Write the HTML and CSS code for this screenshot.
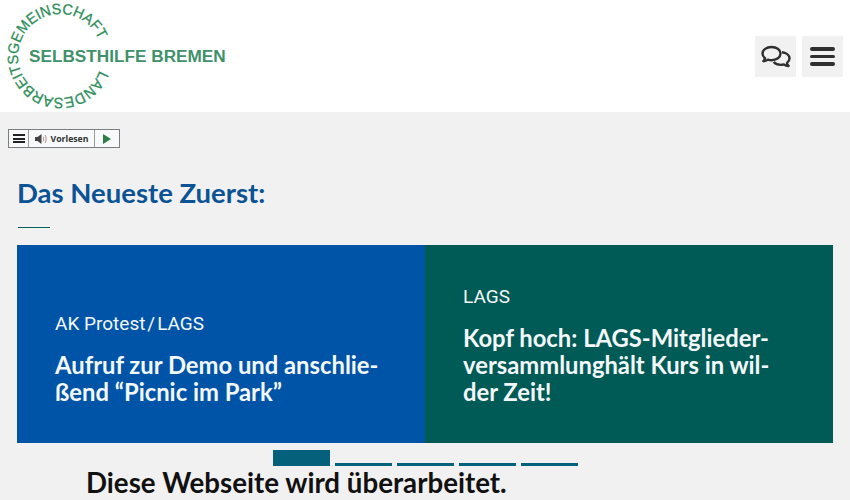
FILE: index.html
```html
<!DOCTYPE html>
<html lang="de">
<head>
<meta charset="utf-8">
<title>Landesarbeitsgemeinschaft Selbsthilfe Bremen</title>
<link rel="stylesheet" href="styles.css">
</head>
<body>
<header class="site-header">
  <a class="logo" href="#">
    <svg class="logo-ring" width="118" height="112" viewBox="0 0 118 112">
      <defs><path id="ring" d="M99.500 70.400 A42 42 0 1 1 100 43"/></defs>
      <text class="logo-ring-text"><textPath href="#ring" textLength="232" lengthAdjust="spacingAndGlyphs">LANDESARBEITSGEMEINSCHAFT</textPath></text>
    </svg>
    <span class="logo-name">SELBSTHILFE BREMEN</span>
  </a>
  <div class="header-actions">
    <button class="icon-btn" aria-label="Forum">
      <svg width="30" height="24" viewBox="0 0 30 24" fill="none" stroke="#2f2f2f" stroke-width="2.400" stroke-linejoin="round">
        <path d="M10.500 2C5.500 2 1.500 4.800 1.500 8.500c0 1.900 1 3.500 2.600 4.700-.2 1.200-.9 2.200-1.700 3 1.800-.1 3.400-.7 4.600-1.600 1.200.4 2.500.6 3.500.6 5 0 9-2.900 9-6.700S15.500 2 10.500 2z"/>
        <path d="M20.800 7.200c4.200.4 7.700 2.900 7.700 6.300 0 1.800-1 3.300-2.500 4.400.1 1.200.7 2.300 1.600 3.100-1.900 0-3.500-.6-4.700-1.600-1 .3-2 .5-3 .5-3 0-5.700-1.100-7.200-2.900"/>
      </svg>
    </button>
    <button class="icon-btn" aria-label="Menü">
      <span class="burger"><i></i><i></i><i></i></span>
    </button>
  </div>
</header>
<main class="content">
  <div class="reader">
    <span class="reader-cell reader-menu"><span class="reader-burger"><i></i><i></i><i></i></span></span>
    <span class="reader-cell reader-label">
      <svg width="13" height="10" viewBox="0 0 13 10"><path d="M0 3h2.500L6.500 0v10L2.500 7H0z" fill="#444"/><path d="M8 2.500c1 1.500 1 3.500 0 5M10 1c1.600 2.400 1.600 5.600 0 8" fill="none" stroke="#b58c8c" stroke-width="1"/></svg>
      Vorlesen
    </span>
    <span class="reader-cell reader-play"><svg width="8" height="10" viewBox="0 0 8 10"><path d="M0 0l8 5-8 5z" fill="#2e7d46"/></svg></span>
  </div>
  <h2 class="section-title">Das Neueste Zuerst:</h2>
  <hr class="section-rule">
  <section class="slider">
    <article class="slide slide-blue">
      <p class="slide-tag">AK Protest&#8202;/&#8202;LAGS</p>
      <h3 class="slide-title">Aufruf zur Demo und anschlie-<br>ßend “Picnic im Park”</h3>
    </article>
    <article class="slide slide-teal">
      <p class="slide-tag">LAGS</p>
      <h3 class="slide-title">Kopf hoch: LAGS-Mitglieder-<br>versammlunghält Kurs in wil-<br>der Zeit!</h3>
    </article>
  </section>
  <div class="dots">
    <span class="dot dot-active"></span><span class="dot"></span><span class="dot"></span><span class="dot"></span><span class="dot"></span>
  </div>
  <h2 class="notice">Diese Webseite wird überarbeitet.</h2>
</main>
</body>
</html>
```
FILE: styles.css
```css
* { box-sizing: border-box; }
html, body { margin: 0; height: 100%; overflow: hidden; }
body { background: #f1f1f1; font-family: "Lato", "Noto Sans", sans-serif; }

.site-header {
  height: 112px;
  background: #fff;
  display: flex;
  align-items: center;
  justify-content: space-between;
  padding: 0 7px 0 0;
}
.logo { display: flex; align-items: center; text-decoration: none; }
.logo-ring { flex: none; }
.logo-ring-text {
  font: 400 15px "Liberation Sans", Arial, sans-serif;
  fill: #2f8f5b;
  stroke: #2f8f5b;
  stroke-width: 0.300px;
}
.logo-name {
  font: 700 17.200px "Liberation Sans", Arial, sans-serif;
  color: #3f9169;
  margin-left: -89px;
  white-space: nowrap;
}
.header-actions { display: flex; gap: 6px; margin-top: 1px; }
.icon-btn {
  width: 41px;
  height: 41px;
  padding: 0;
  border: 0;
  background: #f1f1f1;
  display: flex;
  align-items: center;
  justify-content: center;
}
.burger { display: flex; flex-direction: column; gap: 4px; }
.burger i { display: block; width: 25px; height: 3.500px; border-radius: 2px; background: #2f2f2f; }

.content { padding: 17px 17px 0 17px; }
.reader {
  display: flex;
  width: 112px;
  height: 19px;
  margin-left: -9px;
  border: 1px solid #7d7d7d;
  background: #f7f9fb;
}
.reader-cell { display: flex; align-items: center; justify-content: center; }
.reader-cell + .reader-cell { border-left: 1px solid #9a9a9a; }
.reader-menu { width: 19px; }
.reader-burger { display: flex; flex-direction: column; gap: 1.500px; }
.reader-burger i { display: block; width: 12px; height: 2px; background: #222; }
.reader-label {
  width: 66px;
  gap: 3px;
  font: 700 8.700px "Open Sans", sans-serif;
  color: #333;
}
.reader-play { flex: 1; }

.section-title {
  margin: 29px 0 0;
  font: 700 27.500px/32px "Lato", sans-serif;
  color: #0b5394;
}
.section-rule {
  width: 32px;
  height: 1px;
  margin: 18px 0 17px 1px;
  border: 0;
  background: #00605c;
}
.slider { display: flex; height: 198px; }
.slide {
  flex: 1;
  display: flex;
  flex-direction: column;
  justify-content: flex-end;
  padding: 0 38px 37px;
  color: #f4f8fb;
}
.slide-blue { background: #0054a8; }
.slide-teal { background: #005a55; }
.slide-tag {
  margin: 0 0 16px;
  font: 400 19px/24px "Roboto", sans-serif;
}
.slide-title {
  margin: 0;
  font: 700 23.800px/27px "Lato", sans-serif;
}
.dots {
  display: flex;
  align-items: flex-end;
  gap: 5px;
  height: 16px;
  margin: 7px 0 0 256px;
}
.dot { width: 57px; height: 3px; background: #05607c; }
.dot-active { height: 16px; }
.notice {
  margin: 1px 0 0 69px;
  font: 700 27.700px/32px "Lato", sans-serif;
  color: #111;
}
```
